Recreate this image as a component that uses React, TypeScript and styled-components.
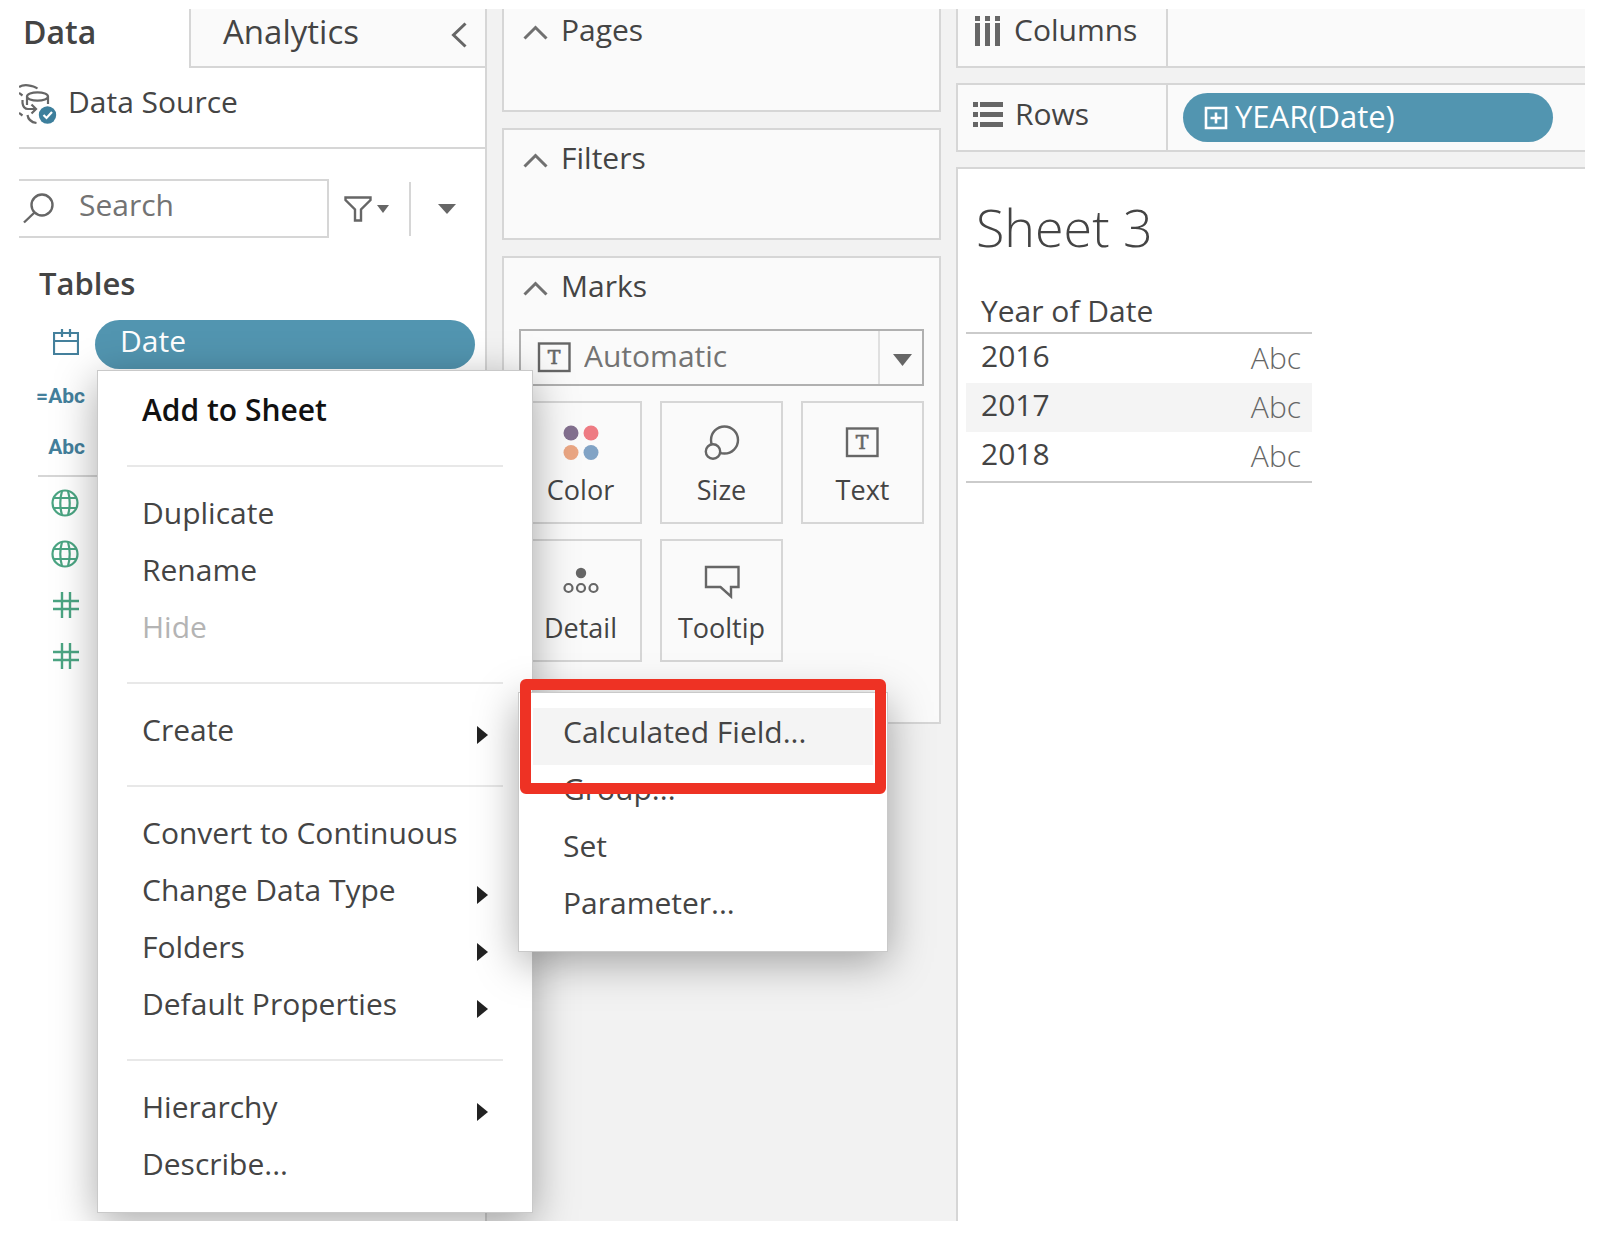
import React from "react";
import styled, { createGlobalStyle, css } from "styled-components";

const c = {
  text: "#444444",
  muted: "#737373",
  icon: "#666666",
  line: "#d6d6d6",
  canvas: "#f2f2f2",
  card: "#fafafa",
  pill: "#5295b0",
  dimension: "#44809c",
  measure: "#4ba583",
  highlight: "#ee3224",
};

const GlobalStyle = createGlobalStyle`
  *, *::before, *::after { box-sizing: border-box; }
  body {
    margin: 0;
    background: #fff;
    color: ${c.text};
    font: 500 30px/40px "Open Sans", "Noto Sans", sans-serif;
  }
  button, input, select { font: inherit; color: inherit; }
  button { background: none; border: 0; padding: 0; margin: 0; text-align: left; }
  ul { list-style: none; margin: 0; padding: 0; }
  h1, h2, h3 { margin: 0; font: inherit; }
  svg { display: block; flex: none; }
`;

const Workspace = styled.main`
  display: flex;
  min-height: calc(100vh - 26px);
  margin: 9px 21px 17px 19px;
  overflow: hidden;
`;

/* ---------- Data pane ---------- */

const DataPane = styled.aside`
  flex: 0 0 468px;
  border-right: 2px solid ${c.line};
`;

const Tabs = styled.div`
  display: flex;
  height: 59px;
`;

const Tab = styled.button<{ $active?: boolean }>`
  font-size: 32px;
  ${(p) =>
    p.$active
      ? css`
          flex: 0 0 170px;
          padding-left: 4px;
          padding-bottom: 14px;
          font-weight: 600;
        `
      : css`
          flex: 1;
          display: flex;
          align-items: center;
          justify-content: space-between;
          padding: 0 18px 12px 32px;
          background: ${c.card};
          border-left: 2px solid ${c.line};
          border-bottom: 2px solid ${c.line};
          font-size: 33px;
          svg { margin-top: 6px; }
        `}
`;

const SourceRow = styled.button`
  display: flex;
  align-items: center;
  gap: 11px;
  width: 100%;
  height: 81px;
  padding-bottom: 12px;
  border-bottom: 2px solid ${c.line};
  svg { margin-top: 4px; }
`;

const SearchRow = styled.div`
  display: flex;
  align-items: center;
  margin-top: 30px;
`;

const SearchBox = styled.label`
  display: flex;
  align-items: center;
  gap: 22px;
  width: 310px;
  height: 59px;
  padding-left: 4px;
  border: 2px solid ${c.line};
  border-left: 0;
`;

const SearchInput = styled.input`
  flex: 1;
  min-width: 0;
  height: 48px;
  padding: 0 0 8px;
  border: 0;
  outline: 0;
  background: transparent;
  &::placeholder { color: ${c.muted}; opacity: 1; }
`;

const FilterButton = styled.button`
  display: flex;
  align-items: center;
  gap: 5px;
  margin: 0 20px 0 15px;
`;

const OptionsButton = styled.button`
  display: flex;
  align-items: center;
  height: 54px;
  padding-left: 27px;
  border-left: 2px solid ${c.line};
`;

const TablesTitle = styled.h2`
  margin: 25px 0 16px 20px;
  font-size: 31px;
  font-weight: 600;
`;

const FieldList = styled.ul`
  margin-left: 19px;
  & + & {
    margin-top: 3px;
    border-top: 2px solid ${c.line};
  }
`;

const FieldRow = styled.li`
  position: relative;
  display: flex;
  align-items: center;
  height: 51px;
`;

const FieldType = styled.span<{ $tone: string }>`
  display: flex;
  justify-content: flex-end;
  width: 47px;
  padding-right: 6px;
  color: ${(p) => p.$tone};
`;

const TypeLabel = styled(FieldType)`
  padding-right: 0;
  font: 700 21px/24px Roboto, sans-serif;
`;

const FieldPill = styled.button`
  flex: 1;
  height: 49px;
  margin: 0 10px 0 10px;
  padding: 0 25px 8px;
  border-radius: 25px;
  background: ${c.pill};
  color: #fff;
  font-weight: 400;
`;

/* ---------- Context menus ---------- */

const Menu = styled.ul`
  position: absolute;
  z-index: 2;
  top: 100%;
  left: 59px;
  width: 436px;
  padding: 15px 14px;
  background: #fff;
  border: 1px solid #c9c9c9;
  box-shadow: 0 10px 40px rgba(0, 0, 0, 0.34);
`;

const SubMenu = styled(Menu)`
  top: -14px;
  left: 100%;
  width: 370px;
`;

const MenuRow = styled.li`
  position: relative;
`;

const MenuButton = styled.button<{ $strong?: boolean; $hover?: boolean }>`
  display: flex;
  align-items: center;
  justify-content: space-between;
  width: 100%;
  height: 57px;
  padding: 0 30px;
  color: ${(p) => (p.$strong ? "#111" : c.text)};
  font-weight: ${(p) => (p.$strong ? 600 : 500)};
  background: ${(p) => (p.$hover ? "#f4f4f4" : "transparent")};
  &:disabled { color: #b4b4b4; }
`;

const MenuText = styled.span`
  padding-bottom: 10px;
`;

const Separator = styled.li`
  height: 2px;
  margin: 22px 15px;
  background: #e8e8e8;
`;

const Callout = styled.div`
  position: absolute;
  top: -14px;
  left: 1px;
  width: 366px;
  height: 115px;
  border: 11px solid ${c.highlight};
  border-radius: 6px;
  pointer-events: none;
`;

/* ---------- Cards ---------- */

const CardColumn = styled.section`
  flex: 0 0 469px;
  display: flex;
  flex-direction: column;
  gap: 16px;
  padding: 0 15px;
  background: ${c.canvas};
`;

const Card = styled.section<{ $first?: boolean }>`
  min-height: ${(p) => (p.$first ? 103 : 112)}px;
  padding: ${(p) => (p.$first ? "1px 15px 0" : "8px 15px 60px")};
  background: ${c.card};
  border: 2px solid ${c.line};
  border-top-width: ${(p) => (p.$first ? 0 : 2)}px;
`;

const CardTitle = styled.h3`
  display: flex;
  align-items: center;
  gap: 13px;
  padding-left: 4px;
  svg { margin-top: 4px; }
`;

const MarkTypeField = styled.div`
  position: relative;
  display: flex;
  align-items: center;
  margin: 23px 0 15px;
  color: ${c.icon};
`;

const MarkType = styled.select`
  width: 100%;
  height: 57px;
  padding: 0 60px 3px 63px;
  appearance: none;
  border: 2px solid #b0b0b0;
  border-radius: 0;
  background: transparent;
  color: ${c.muted};
`;

const MarkTypeIcon = styled.span`
  position: absolute;
  left: 18px;
  pointer-events: none;
`;

const MarkTypeCaret = styled.span`
  position: absolute;
  top: 2px;
  right: 2px;
  bottom: 2px;
  display: flex;
  align-items: center;
  width: 44px;
  padding-top: 4px;
  padding-left: 13px;
  border-left: 2px solid #e0e0e0;
  pointer-events: none;
`;

const MarkGrid = styled.div`
  display: grid;
  grid-template-columns: repeat(3, 1fr);
  gap: 15px 18px;
`;

const MarkButton = styled.button`
  display: flex;
  flex-direction: column;
  align-items: center;
  gap: 13px;
  height: 123px;
  padding-top: 22px;
  border: 2px solid ${c.line};
  font-size: 27px;
  line-height: 32px;
`;

/* ---------- Shelves and sheet ---------- */

const ViewColumn = styled.section`
  flex: 1;
  min-width: 0;
  display: flex;
  flex-direction: column;
  gap: 15px;
  background: ${c.canvas};
`;

const Shelf = styled.div<{ $first?: boolean }>`
  display: flex;
  height: ${(p) => (p.$first ? 59 : 69)}px;
  background: ${c.card};
  border: 2px solid ${c.line};
  border-right: 0;
  border-top-width: ${(p) => (p.$first ? 0 : 2)}px;
`;

const ShelfName = styled.h3<{ $first?: boolean }>`
  display: flex;
  align-items: center;
  gap: 12px;
  width: 210px;
  padding: 0 0 ${(p) => (p.$first ? 16 : 8)}px 15px;
  border-right: 2px solid ${c.line};
  svg { margin-top: 3px; }
`;

const ShelfArea = styled.div`
  flex: 1;
  display: flex;
  align-items: center;
  padding: 0 32px 0 15px;
`;

const ShelfPill = styled.button`
  display: flex;
  align-items: center;
  gap: 7px;
  flex: 1;
  height: 49px;
  padding: 0 21px 3px;
  border-radius: 25px;
  background: ${c.pill};
  color: #fff;
  font-size: 31px;
  font-weight: 400;
  svg { margin-top: 4px; }
`;

const Sheet = styled.article`
  flex: 1;
  padding: 24px 8px;
  background: #fff;
  border: 2px solid ${c.line};
  border-right: 0;
  border-bottom: 0;
`;

const SheetTitle = styled.h1`
  padding-left: 10px;
  font-size: 52px;
  font-weight: 300;
  line-height: 68px;
`;

const DataTable = styled.table`
  width: 346px;
  margin-top: 30px;
  border-spacing: 0;
  border-bottom: 2px solid #cbcbcb;
`;

const HeadCell = styled.th`
  padding: 0 0 1px 15px;
  border-bottom: 2px solid #cbcbcb;
  font-weight: 500;
  text-align: left;
`;

const DataRow = styled.tr`
  height: 49px;
  &:nth-child(even) { background: #f4f4f4; }
`;

const YearCell = styled.th`
  padding: 0 0 6px 15px;
  font-weight: 500;
  text-align: left;
`;

const MarkCell = styled.td`
  padding: 0 11px 1px 0;
  color: ${c.icon};
  font-weight: 300;
  text-align: right;
`;

/* ---------- Icons ---------- */

const CaretDown = ({ w, h }: { w: number; h: number }) => (
  <svg width={w} height={h} viewBox="0 0 18 11" preserveAspectRatio="none" aria-hidden="true">
    <path d="M0 0H18L9 11Z" fill={c.icon} />
  </svg>
);

const CaretRight = () => (
  <svg width="11" height="18" viewBox="0 0 11 18" aria-hidden="true">
    <path d="M0 0L11 9L0 18Z" fill="#222" />
  </svg>
);

const ChevronUp = () => (
  <svg width="25" height="15" viewBox="0 0 25 15" fill="none" stroke="#707070" strokeWidth="3" aria-hidden="true">
    <path d="M1.5 13.5L12.5 2.5L23.5 13.5" />
  </svg>
);

const ChevronLeft = () => (
  <svg width="16" height="26" viewBox="0 0 16 26" fill="none" stroke={c.icon} strokeWidth="3" aria-hidden="true">
    <path d="M14.5 1.5L2.5 13L14.5 24.5" />
  </svg>
);

const DataSourceIcon = () => (
  <svg width="38" height="42" viewBox="0 0 38 42" fill="none" stroke="#666" strokeWidth="2.2" aria-hidden="true">
    <path d="M0 4C4 1 14 2 18.500 5.500M0 10L3.500 12.500" />
    <ellipse cx="18.500" cy="13.500" rx="10.500" ry="4.200" />
    <path d="M8 13.500V22M29 13.500V21" />
    <path d="M3.500 17V20C4 24 5.500 26 9 26H17M12.500 21.500L17 26L12.500 30.500" />
    <path d="M0 30L3.500 32.500M8.500 32C9 36 11 39 17.500 40" />
    <circle cx="28.500" cy="32" r="8.700" fill="#3d7f9c" stroke="none" />
    <path d="M24.500 32L27.500 35L33 29" stroke="#fff" />
  </svg>
);

const SearchIcon = () => (
  <svg width="34" height="32" viewBox="0 0 34 32" fill="none" stroke={c.icon} strokeWidth="2.4" aria-hidden="true">
    <circle cx="19" cy="12" r="10.500" />
    <path d="M11.500 19.500L1 29.500" />
  </svg>
);

const FunnelIcon = () => (
  <svg width="28" height="26" viewBox="0 0 28 26" fill="none" stroke={c.icon} strokeWidth="2.400" aria-hidden="true">
    <path d="M1.500 1.500H26.500V4L17 13.500V24.500H11V13.500L1.500 4Z" />
  </svg>
);

const CalendarIcon = () => (
  <svg width="26" height="32" viewBox="0 0 26 32" fill="none" stroke="currentColor" strokeWidth="2.200" aria-hidden="true">
    <path d="M1 4H25V25H1ZM1 12H25M9 0V8M17 0V8" />
  </svg>
);

const GlobeIcon = () => (
  <svg width="28" height="28" viewBox="0 0 28 28" fill="none" stroke="currentColor" strokeWidth="2.200" aria-hidden="true">
    <circle cx="14" cy="14" r="12.500" />
    <path d="M3 9H25M3 19H25M11 2C9 9 9 19 11 26M17 2C19 9 19 19 17 26" />
  </svg>
);

const HashIcon = () => (
  <svg width="26" height="26" viewBox="0 0 26 26" fill="none" stroke="currentColor" strokeWidth="2.400" aria-hidden="true">
    <path d="M9 0V26M17 0V26M0 9H26M0 17H26" />
  </svg>
);

const TextIcon = () => (
  <svg width="36" height="36" viewBox="0 0 36 36" aria-hidden="true">
    <rect x="2" y="3.500" width="30.500" height="27.500" fill="none" stroke={c.icon} strokeWidth="2.400" />
    <text x="17" y="24" textAnchor="middle" fill={c.icon} stroke={c.icon} strokeWidth="0.600" fontFamily="DejaVu Serif, serif" fontSize="19">
      T
    </text>
  </svg>
);

const ColorIcon = () => (
  <svg width="36" height="36" viewBox="0 0 36 36" aria-hidden="true">
    <circle cx="8" cy="8" r="7.500" fill="#83708f" />
    <circle cx="28" cy="8" r="7.500" fill="#ee7b83" />
    <circle cx="8" cy="27.500" r="7.500" fill="#eaa683" />
    <circle cx="28" cy="27.500" r="7.500" fill="#81a3c5" />
  </svg>
);

const SizeIcon = () => (
  <svg width="36" height="36" viewBox="0 0 36 36" fill={c.card} stroke={c.icon} strokeWidth="2.400" aria-hidden="true">
    <circle cx="20.500" cy="15" r="13.500" />
    <circle cx="9" cy="26.500" r="7.200" />
  </svg>
);

const DetailIcon = () => (
  <svg width="36" height="36" viewBox="0 0 36 36" fill="none" stroke={c.icon} strokeWidth="2.200" aria-hidden="true">
    <circle cx="18" cy="10" r="5.200" fill={c.icon} stroke="none" />
    <circle cx="5.500" cy="25" r="4" />
    <circle cx="18" cy="25" r="4" />
    <circle cx="30.500" cy="25" r="4" />
  </svg>
);

const TooltipIcon = () => (
  <svg width="36" height="36" viewBox="0 0 36 36" fill="none" stroke={c.icon} strokeWidth="2.400" aria-hidden="true">
    <path d="M2 4H34.500V24H27V33.500L16.500 24H2Z" />
  </svg>
);

const ColumnsIcon = () => (
  <svg width="29" height="30" viewBox="0 0 29 30" fill={c.icon} aria-hidden="true">
    <path d="M2 0H7V5H2ZM12 0H17V5H12ZM22 0H27V5H22ZM2 7H7V30H2ZM12 7H17V30H12ZM22 7H27V30H22Z" />
  </svg>
);

const RowsIcon = () => (
  <svg width="30" height="26" viewBox="0 0 30 26" fill={c.icon} aria-hidden="true">
    <path d="M0 0H5V5H0ZM0 10H5V15H0ZM0 20H5V25H0ZM7 0H30V5H7ZM7 10H30V15H7ZM7 20H30V25H7Z" />
  </svg>
);

const ExpandIcon = () => (
  <svg width="24" height="24" viewBox="0 0 24 24" fill="none" stroke="#fff" strokeWidth="2.600" aria-hidden="true">
    <path d="M2 2H22V22H2ZM12 6.500V17.500M6.500 12H17.500" />
  </svg>
);

/* ---------- Content ---------- */

const marks = [
  { name: "Color", icon: <ColorIcon /> },
  { name: "Size", icon: <SizeIcon /> },
  { name: "Text", icon: <TextIcon /> },
  { name: "Detail", icon: <DetailIcon /> },
  { name: "Tooltip", icon: <TooltipIcon /> },
];

type ItemProps = {
  label: string;
  strong?: boolean;
  hover?: boolean;
  disabled?: boolean;
  more?: boolean;
  children?: React.ReactNode;
};

const Item = ({ label, strong, hover, disabled, more, children }: ItemProps) => (
  <MenuRow role="none">
    <MenuButton role="menuitem" $strong={strong} $hover={hover} disabled={disabled}>
      <MenuText>{label}</MenuText>
      {more && <CaretRight />}
    </MenuButton>
    {children}
  </MenuRow>
);

const CreateMenu = () => (
  <SubMenu role="menu" aria-label="Create">
    <Item label="Calculated Field..." hover />
    <Item label="Group..." />
    <Item label="Set" />
    <Item label="Parameter..." />
    <Callout />
  </SubMenu>
);

const FieldMenu = () => (
  <Menu role="menu" aria-label="Date">
    <Item label="Add to Sheet" strong />
    <Separator role="separator" />
    <Item label="Duplicate" />
    <Item label="Rename" />
    <Item label="Hide" disabled />
    <Separator role="separator" />
    <Item label="Create" more>
      <CreateMenu />
    </Item>
    <Separator role="separator" />
    <Item label="Convert to Continuous" />
    <Item label="Change Data Type" more />
    <Item label="Folders" more />
    <Item label="Default Properties" more />
    <Separator role="separator" />
    <Item label="Hierarchy" more />
    <Item label="Describe..." />
  </Menu>
);

export default function App() {
  return (
    <>
      <GlobalStyle />
      <Workspace>
        <DataPane>
          <Tabs>
            <Tab $active>Data</Tab>
            <Tab>
              Analytics
              <ChevronLeft />
            </Tab>
          </Tabs>
          <SourceRow>
            <DataSourceIcon />
            Data Source
          </SourceRow>
          <SearchRow>
            <SearchBox>
              <SearchIcon />
              <SearchInput type="text" placeholder="Search" aria-label="Search" />
            </SearchBox>
            <FilterButton aria-label="Filter fields">
              <FunnelIcon />
              <CaretDown w={12} h={8} />
            </FilterButton>
            <OptionsButton aria-label="Pane options">
              <CaretDown w={18} h={10} />
            </OptionsButton>
          </SearchRow>
          <TablesTitle>Tables</TablesTitle>
          <FieldList>
            <FieldRow>
              <FieldType $tone={c.dimension}>
                <CalendarIcon />
              </FieldType>
              <FieldPill>Date</FieldPill>
              <FieldMenu />
            </FieldRow>
            <FieldRow>
              <TypeLabel $tone={c.dimension}>=Abc</TypeLabel>
            </FieldRow>
            <FieldRow>
              <TypeLabel $tone={c.dimension}>Abc</TypeLabel>
            </FieldRow>
          </FieldList>
          <FieldList>
            {[GlobeIcon, GlobeIcon, HashIcon, HashIcon].map((Icon, i) => (
              <FieldRow key={i}>
                <FieldType $tone={c.measure}>
                  <Icon />
                </FieldType>
              </FieldRow>
            ))}
          </FieldList>
        </DataPane>

        <CardColumn>
          <Card $first>
            <CardTitle>
              <ChevronUp />
              Pages
            </CardTitle>
          </Card>
          <Card>
            <CardTitle>
              <ChevronUp />
              Filters
            </CardTitle>
          </Card>
          <Card>
            <CardTitle>
              <ChevronUp />
              Marks
            </CardTitle>
            <MarkTypeField>
              <MarkType aria-label="Mark type" defaultValue="Automatic">
                <option>Automatic</option>
              </MarkType>
              <MarkTypeIcon>
                <TextIcon />
              </MarkTypeIcon>
              <MarkTypeCaret>
                <CaretDown w={19} h={12} />
              </MarkTypeCaret>
            </MarkTypeField>
            <MarkGrid>
              {marks.map((m) => (
                <MarkButton key={m.name}>
                  {m.icon}
                  {m.name}
                </MarkButton>
              ))}
            </MarkGrid>
          </Card>
        </CardColumn>

        <ViewColumn>
          <Shelf $first>
            <ShelfName $first>
              <ColumnsIcon />
              Columns
            </ShelfName>
            <ShelfArea />
          </Shelf>
          <Shelf>
            <ShelfName>
              <RowsIcon />
              Rows
            </ShelfName>
            <ShelfArea>
              <ShelfPill>
                <ExpandIcon />
                YEAR(Date)
              </ShelfPill>
            </ShelfArea>
          </Shelf>
          <Sheet>
            <SheetTitle>Sheet 3</SheetTitle>
            <DataTable>
              <thead>
                <tr>
                  <HeadCell scope="col" colSpan={2}>
                    Year of Date
                  </HeadCell>
                </tr>
              </thead>
              <tbody>
                {[2016, 2017, 2018].map((year) => (
                  <DataRow key={year}>
                    <YearCell scope="row">{year}</YearCell>
                    <MarkCell>Abc</MarkCell>
                  </DataRow>
                ))}
              </tbody>
            </DataTable>
          </Sheet>
        </ViewColumn>
      </Workspace>
    </>
  );
}
